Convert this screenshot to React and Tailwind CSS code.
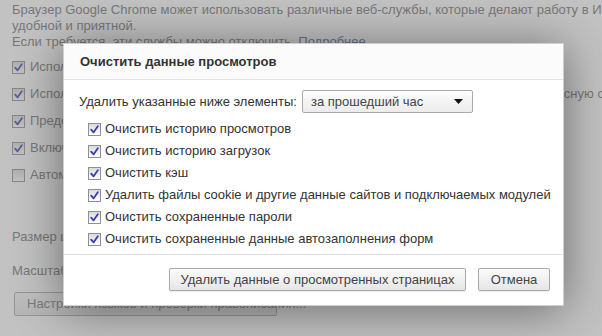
import React from "react";

const FONT = { fontFamily: '"Liberation Sans", Arial, sans-serif' };

// фоновые настройки (под диалогом)
const PAGE_ROWS = [
  { checked: true, text: "Использовать веб-службу для разрешения проблем, связанных с навигацией" },
  { checked: true, text: "Использовать подсказки для завершения поисковых запросов и URL, вводимых в адресную строку" },
  { checked: true, text: "Предсказывать сетевые действия для ускорения загрузки страниц" },
  { checked: true, text: "Включить защиту от фишинга и вредоносного ПО" },
  { checked: false, text: "Автоматически отправлять в Google статистику использования и отчеты о сбоях" }
];

const ITEMS = [
  "Очистить историю просмотров",
  "Очистить историю загрузок",
  "Очистить кэш",
  "Удалить файлы cookie и другие данные сайтов и подключаемых модулей",
  "Очистить сохраненные пароли",
  "Очистить сохраненные данные автозаполнения форм"
];

function Check({ checked = true }) {
  return (
    <span className="inline-flex w-[13px] h-[13px] shrink-0 items-center justify-center border border-[#8e8f8f] bg-gradient-to-b from-[#dcdcdc] to-[#ffffff]">
      {checked && (
        <svg width="9" height="9" viewBox="0 0 9 9">
          <path d="M1.2 4.6 L3.5 7.4 L7.8 1.2" fill="none" stroke="#3a3fae" strokeWidth="1.8" strokeLinecap="round" strokeLinejoin="round" />
        </svg>
      )}
    </span>
  );
}

function Btn({ children, className = "" }) {
  return (
    <button className={"h-[23px] rounded-[2px] border border-[#a9a9a9] bg-gradient-to-b from-[#fbfbfb] to-[#e6e6e6] text-[13px] text-[#444] shadow-[0_1px_1px_rgba(0,0,0,0.08)] " + className}>
      {children}
    </button>
  );
}

export default function App() {
  return (
    <div className="relative w-[602px] h-[336px] overflow-hidden bg-white text-[13px] text-[#707070]" style={FONT}>
      {/* страница настроек */}
      <div className="pl-3 pt-[2px] leading-[16px] whitespace-nowrap">
        <div>Браузер Google Chrome может использовать различные веб-службы, которые делают работу в Интернете более</div>
        <div>удобной и приятной.</div>
        <div>
          Если требуется, эти службы можно отключить. <span className="text-[#4a64a8]">Подробнее</span>
        </div>
        <div className="mt-[10px] flex flex-col gap-[13px]">
          {PAGE_ROWS.map((r, i) => (
            <div key={i} className="flex items-center gap-[5px] h-[14px]">
              <Check checked={r.checked} />
              <span className={i === 1 ? "tracking-[0.07px]" : ""}>{r.text}</span>
            </div>
          ))}
        </div>
        <div className="mt-[47px]">Размер шрифта:</div>
        <div className="mt-[18px]">Масштаб страницы:</div>
        <button className="mt-[13px] ml-[2px] h-[24px] w-[263px] rounded-[2px] border border-[#aaa] bg-gradient-to-b from-[#fafafa] to-[#e8e8e8] text-left pl-[12px] text-[#777]">
          Настройки языков и проверки правописания...
        </button>
      </div>

      {/* затемнение */}
      <div className="absolute inset-0 bg-[rgba(128,128,128,0.48)]" />

      {/* диалог */}
      <div className="absolute left-[63px] top-[43px] w-[501px] h-[263px] bg-white border border-[#cfcfcf] shadow-[0_4px_45px_rgba(0,0,0,0.45)] flex flex-col text-[#333]">
        <div className="h-[36px] shrink-0 flex items-center pl-[16px] bg-[#fbfbfb] border-b border-[#e3e3e3] font-bold text-[13px] text-[#333]">
          Очистить данные просмотров
        </div>
        <div className="pl-[15px] pt-[10px]">
          <div className="flex items-center gap-[5px]">
            <span>Удалить указанные ниже элементы:</span>
            <div className="w-[171px] h-[23px] flex items-center justify-between pl-[8px] pr-[9px] rounded-[2px] border border-[#aaa] bg-gradient-to-b from-[#fdfdfd] to-[#ececec]">
              <span className="text-[#444]">за прошедший час</span>
              <svg width="9" height="5" viewBox="0 0 9 5">
                <path d="M0 0 H9 L4.5 5 Z" fill="#111" />
              </svg>
            </div>
          </div>
          <div className="pl-[9px] pt-[5px] flex flex-col">
            {ITEMS.map((t, i) => (
              <div key={i} className="h-[22px] flex items-center gap-[4px]">
                <Check />
                <span>{t}</span>
              </div>
            ))}
          </div>
        </div>
        <div className="mt-auto h-[51px] border-t border-[#e3e3e3] flex items-center justify-end gap-[12px] pr-[13px] pb-[1px]">
          <Btn className="w-[297px]">Удалить данные о просмотренных страницах</Btn>
          <Btn className="w-[72px]">Отмена</Btn>
        </div>
      </div>
    </div>
  );
}
